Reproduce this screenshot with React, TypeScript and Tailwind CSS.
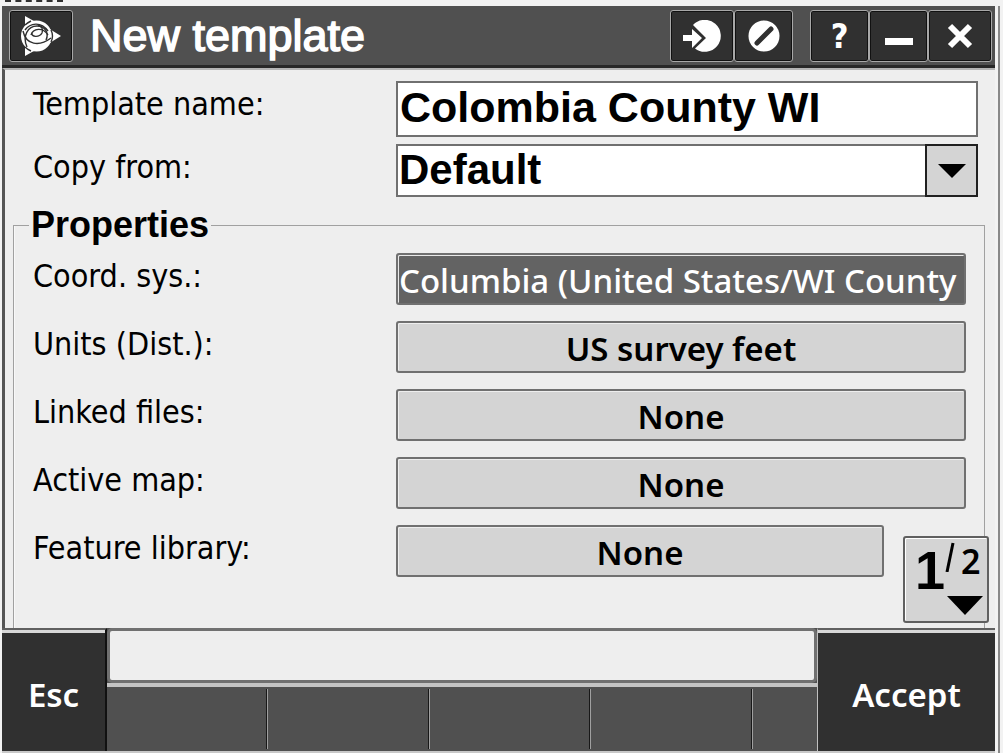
import type { ReactNode } from "react";

const SANS = "font-['DejaVu_Sans_Condensed','DejaVu_Sans',sans-serif]";
const UI = "font-['Noto_Sans',sans-serif]";
const ARIAL = "font-['Liberation_Sans',Arial,sans-serif]";

function TitleButton({ label, wide, children }: { label: string; wide?: boolean; children: ReactNode }) {
  return (
    <button
      type="button"
      aria-label={label}
      className={`flex h-[52px] items-center justify-center rounded-[3px] border border-[#a8a8a8] bg-[#303030] shadow-[inset_0_0_0_1px_#111] ${wide ? "w-16" : "w-[59px]"}`}
    >
      {children}
    </button>
  );
}

function GlobeLogo() {
  return (
    <svg width="40" height="40" viewBox="0 0 40 40" fill="none">
      <path d="M4 0 L20 9 L4 18 Z M4 40 L20 31 L4 22 Z M40 20 L27 12 L27 28 Z" fill="#fff" />
      <circle cx="15.5" cy="20" r="15.5" fill="#fff" />
      <g stroke="#303030" strokeWidth="1.4">
        <path d="M4 9 C6 7 8 6 10 5 M4 31 C6 33 8 34 10 35 M30 14 C32 18 32 22 30 26" />
        <path d="M2 15 C5 29 18 31 30 22" />
        <path d="M6 31 C1 20 7 10 16 10 C25 10 28 18 25 24" />
        <path d="M4 14 C9 7 20 5 27 15" />
        <path d="M10 19 C12 12 22 11 27 19" />
        <path d="M11 17 C10 21 18 22 21 17 C23 13 20 10 17 9" />
      </g>
    </svg>
  );
}

function PropertyRow({ id, label, value, selected, short }: { id: string; label: string; value: string; selected?: boolean; short?: boolean }) {
  return (
    <div className="flex items-start">
      <label htmlFor={id} className={`${SANS} w-[363px] shrink-0 pt-[3px] text-[32px] leading-[40px]`}>
        {label}
      </label>
      <button
        id={id}
        type="button"
        className={`${UI} h-[52px] min-w-0 flex-1 overflow-hidden rounded-[3px] border-2 border-[#707070] pt-1 text-[33px] leading-[44px] whitespace-nowrap ${short ? "mr-[82px]" : ""} ${
          selected
            ? "bg-[#636363] pl-px text-left font-medium text-white shadow-[inset_1px_1px_0_#e8e8e8]"
            : "bg-[#d4d4d4] text-center font-semibold text-black shadow-[inset_1px_1px_0_#eeeeee]"
        }`}
      >
        {value}
      </button>
    </div>
  );
}

function SoftKey({ last }: { last?: boolean }) {
  return (
    <button
      type="button"
      aria-label="Unassigned soft key"
      className={`h-[60px] ${last ? "flex-[2]" : "flex-[5] border-r border-[#a0a0a0] shadow-[inset_-1px_0_0_#181818]"}`}
    />
  );
}

export default function App() {
  return (
    <div className="flex min-h-screen flex-col bg-[#f2f2f2] text-black">
      <div className="h-1.5 shrink-0 pl-[5px]">
        <div className="h-0.5 w-[58px] border-t-2 border-dashed border-[#303030]" />
      </div>
      <main className="mr-[3px] ml-0.5 flex flex-1 flex-col border-r-2 border-[#888] pr-[3px]">
        <header className="flex h-[62px] items-center border-b-[3px] border-[#282828] bg-[#505050] pr-[3px] pl-[7px]">
          <TitleButton label="Application menu" wide>
            <GlobeLogo />
          </TitleButton>
          <h1 className={`${ARIAL} ml-[17px] flex-1 text-[45px] leading-[50px] font-normal text-white [-webkit-text-stroke:1.5px_#fff]`}>New template</h1>
          <div className="flex">
            <TitleButton label="Switch to" wide>
              <svg width="38" height="32" viewBox="0 0 38 32" fill="#fff">
                <path d="M10 5 A16 16 0 1 1 12 28.500 L23 18 Z" />
                <path d="M0 15 H9 V9 L19 18 L9 28 V21 H0 Z" />
              </svg>
            </TitleButton>
            <TitleButton label="Favorites">
              <svg width="32" height="32" viewBox="0 0 32 32">
                <circle cx="16" cy="16" r="15.5" fill="#fff" />
                <path d="M9 23 L23 9" stroke="#303030" strokeWidth="5" strokeLinecap="round" />
              </svg>
            </TitleButton>
          </div>
          <div className="ml-[17px] flex">
            <TitleButton label="Help">
              <span className="font-['DejaVu_Sans_Condensed','DejaVu_Sans',sans-serif] text-[34px] leading-[40px] font-bold text-white">?</span>
            </TitleButton>
            <TitleButton label="Minimize">
              <svg width="30" height="28" viewBox="0 0 30 28">
                <path d="M1 16 H29 V23 H1 Z" fill="#fff" />
              </svg>
            </TitleButton>
            <TitleButton label="Close" wide>
              <svg width="26" height="26" viewBox="0 0 26 26">
                <path d="M3 3 L23 23 M23 3 L3 23" stroke="#fff" strokeWidth="6" />
              </svg>
            </TitleButton>
          </div>
        </header>

        <form className="relative flex-1 border-t-2 border-l-[3px] border-t-[#b4b4b4] border-l-[#555] bg-[#eeeeee] pt-[11px] pr-2.5 pl-2">
          <div className="flex pr-[7px] pl-5">
            <label htmlFor="template-name" className={`${SANS} w-[363px] shrink-0 pt-[3px] text-[32px] leading-[40px]`}>
              Template name:
            </label>
            <input
              id="template-name"
              defaultValue="Colombia County WI"
              className={`${ARIAL} h-14 min-w-0 flex-1 border-2 border-[#707070] bg-white px-0.5 pb-1 text-[43px] leading-[46px] font-bold outline-none`}
            />
          </div>
          <div className="mt-[7px] flex pr-[7px] pl-5">
            <label htmlFor="copy-from" className={`${SANS} w-[363px] shrink-0 pt-[3px] text-[32px] leading-[40px]`}>
              Copy from:
            </label>
            <div className="relative flex min-w-0 flex-1">
              <select
                id="copy-from"
                defaultValue="Default"
                className={`${ARIAL} h-[53px] w-full appearance-none border-2 border-[#707070] bg-white pb-0.5 pl-px text-[42px] leading-[46px] font-bold outline-none`}
              >
                <option>Default</option>
              </select>
              <span className="pointer-events-none absolute inset-y-0 right-0 flex w-[53px] items-center justify-center border-2 border-[#202020] bg-[#d4d4d4]">
                <svg width="28" height="14" viewBox="0 0 28 14">
                  <path d="M0 0 H28 L14 14 Z" />
                </svg>
              </span>
            </div>
          </div>

          <fieldset className="mt-2 min-w-0 border-x border-t border-[#a0a0a0] pr-[18px] pb-[51px] pl-[19px] shadow-[inset_1px_0_0_#f8f8f8]">
            <legend className={`${ARIAL} -ml-1 px-0.5 text-[36px] leading-[40px] font-bold`}>Properties</legend>
            <div className="mt-2 flex flex-col gap-4">
              <PropertyRow id="coord-sys" label="Coord. sys.:" value="Columbia (United States/WI County" selected />
              <PropertyRow id="units" label="Units (Dist.):" value="US survey feet" />
              <PropertyRow id="linked-files" label="Linked files:" value="None" />
              <PropertyRow id="active-map" label="Active map:" value="None" />
              <PropertyRow id="feature-library" label="Feature library:" value="None" short />
            </div>
          </fieldset>

          <button
            type="button"
            aria-label="Page 1 of 2"
            className="absolute right-1.5 bottom-[5px] h-[87px] w-[86px] rounded-[3px] border-2 border-[#606060] bg-[#d4d4d4] pl-2.5 shadow-[inset_1px_1px_0_#fff]"
          >
            <span className={`${ARIAL} flex h-full items-start pt-1 text-black`}>
              <span className="text-[54px] leading-[56px] font-bold">1</span>
              <svg width="10" height="30" viewBox="0 0 10 30">
                <path d="M8 1 L2 30" stroke="#000" strokeWidth="3" />
              </svg>
              <span className={`${UI} ml-1.5 text-[34px] leading-[38px] font-semibold`}>2</span>
            </span>
            <svg className="absolute right-1 bottom-1.5" width="36" height="19" viewBox="0 0 36 19">
              <path d="M0 0 H36 L18 19 Z" />
            </svg>
          </button>
        </form>

        <footer className={`${UI} flex border-b-2 border-[#c8c8c8] text-[33px] font-semibold text-white`}>
          <button type="button" className="h-[123px] w-[105px] border-t-2 border-r-2 border-t-[#606060] border-r-[#111] bg-[#303030] pt-2 shadow-[inset_0_3px_0_#d8d8d8]">
            Esc
          </button>
          <div className="flex min-w-0 flex-1 flex-col bg-[#505050]">
            <output className="h-[55px] rounded-[5px] border-[3px] border-[#707070] bg-[#eeeeee]" />
            <div className="flex flex-1 items-center border-t-4 border-[#c4c4c4]">
              <SoftKey />
              <SoftKey />
              <SoftKey />
              <SoftKey />
              <SoftKey last />
            </div>
          </div>
          <button type="button" className="h-[123px] w-[178px] border-t-2 border-l border-t-[#606060] border-l-[#c0c0c0] bg-[#303030] pt-2 shadow-[inset_0_3px_0_#d8d8d8]">
            Accept
          </button>
        </footer>
      </main>
    </div>
  );
}
